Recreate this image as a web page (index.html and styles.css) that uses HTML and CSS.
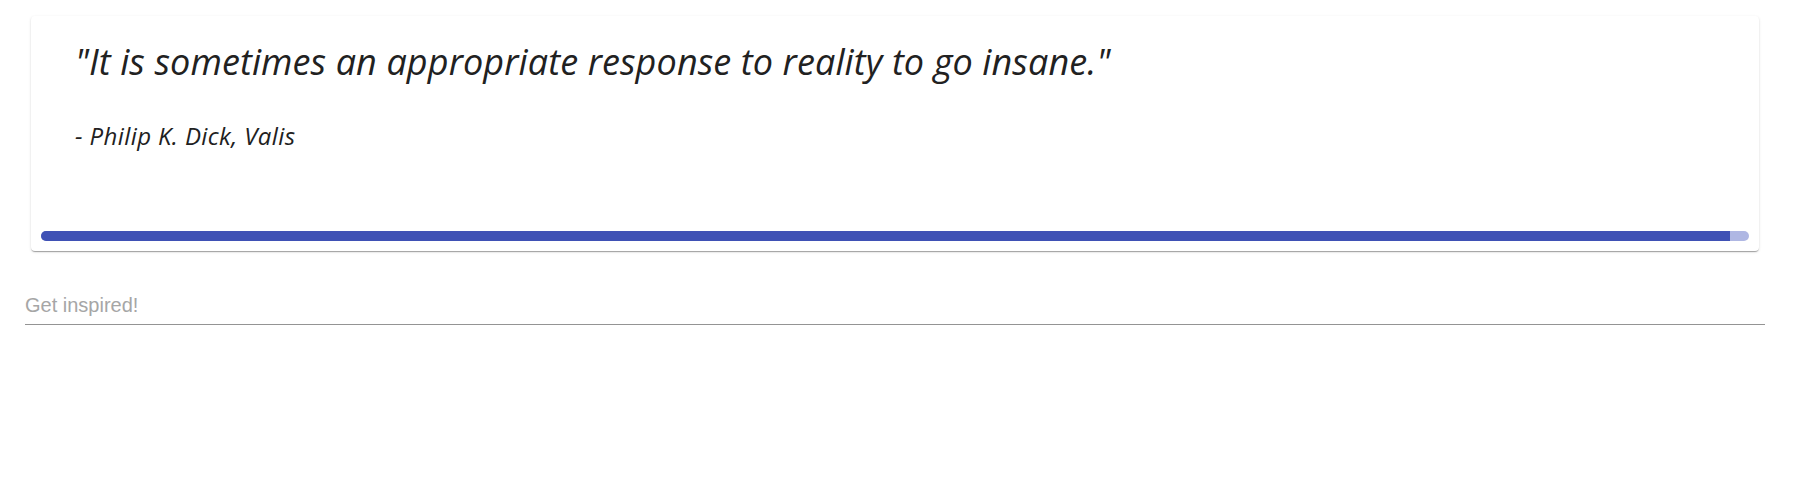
FILE: index.html
```html
<!DOCTYPE html>
<html lang="en">
<head>
<meta charset="utf-8">
<title>Quote</title>
<link rel="stylesheet" href="styles.css">
</head>
<body>
<main class="page">
  <section class="card">
    <div class="card-body">
      <h1 class="quote">"It is sometimes an appropriate response to reality to go insane."</h1>
      <p class="author">- Philip K. Dick, Valis</p>
    </div>
    <div class="progress">
      <div class="progress-fill" style="width: 98.9%"></div>
    </div>
  </section>
  <div class="field">
    <input class="field-input" type="text" placeholder="Get inspired!">
  </div>
</main>
</body>
</html>
```
FILE: styles.css
```css
html, body {
  margin: 0;
  padding: 0;
  background: #ffffff;
}

.page {
  padding: 16px 32px 0 25px;
  display: flex;
  flex-direction: column;
}

.card {
  margin: 0 6px;
  background: #fff;
  border-radius: 4px;
  box-shadow: 0 2px 1px -1px rgba(0,0,0,0.2), 0 1px 1px 0 rgba(0,0,0,0.14), 0 1px 3px 0 rgba(0,0,0,0.12);
  display: flex;
  flex-direction: column;
  padding: 22px 10px 10px 10px;
}

.card-body {
  padding: 0 34px;
  display: flex;
  flex-direction: column;
  height: 193px;
}

.quote {
  margin: 0;
  font-family: "Open Sans", "Noto Sans", sans-serif;
  font-style: italic;
  font-weight: 400;
  font-size: 36px;
  line-height: 48px;
  color: #212121;
  letter-spacing: 0.1px;
}

.author {
  margin: 34px 0 0 0;
  font-family: "Open Sans", "Noto Sans", sans-serif;
  font-style: italic;
  font-size: 24px;
  line-height: 32px;
  color: #212121;
  letter-spacing: 0.4px;
}

.progress {
  height: 10px;
  border-radius: 5px;
  background: #afb7e3;
  overflow: hidden;
}

.progress-fill {
  height: 100%;
  background: #3f51b5;
}

.field {
  margin-top: 42px;
}

.field-input {
  display: block;
  width: 100%;
  box-sizing: border-box;
  border: none;
  border-bottom: 1px solid #949494;
  outline: none;
  padding: 0 0 7px 0;
  font-family: "Liberation Sans", Arial, sans-serif;
  font-size: 20px;
  line-height: 24px;
  height: 32px;
  color: #212121;
  background: transparent;
}

.field-input::placeholder {
  color: #a6a6a6;
}
```
